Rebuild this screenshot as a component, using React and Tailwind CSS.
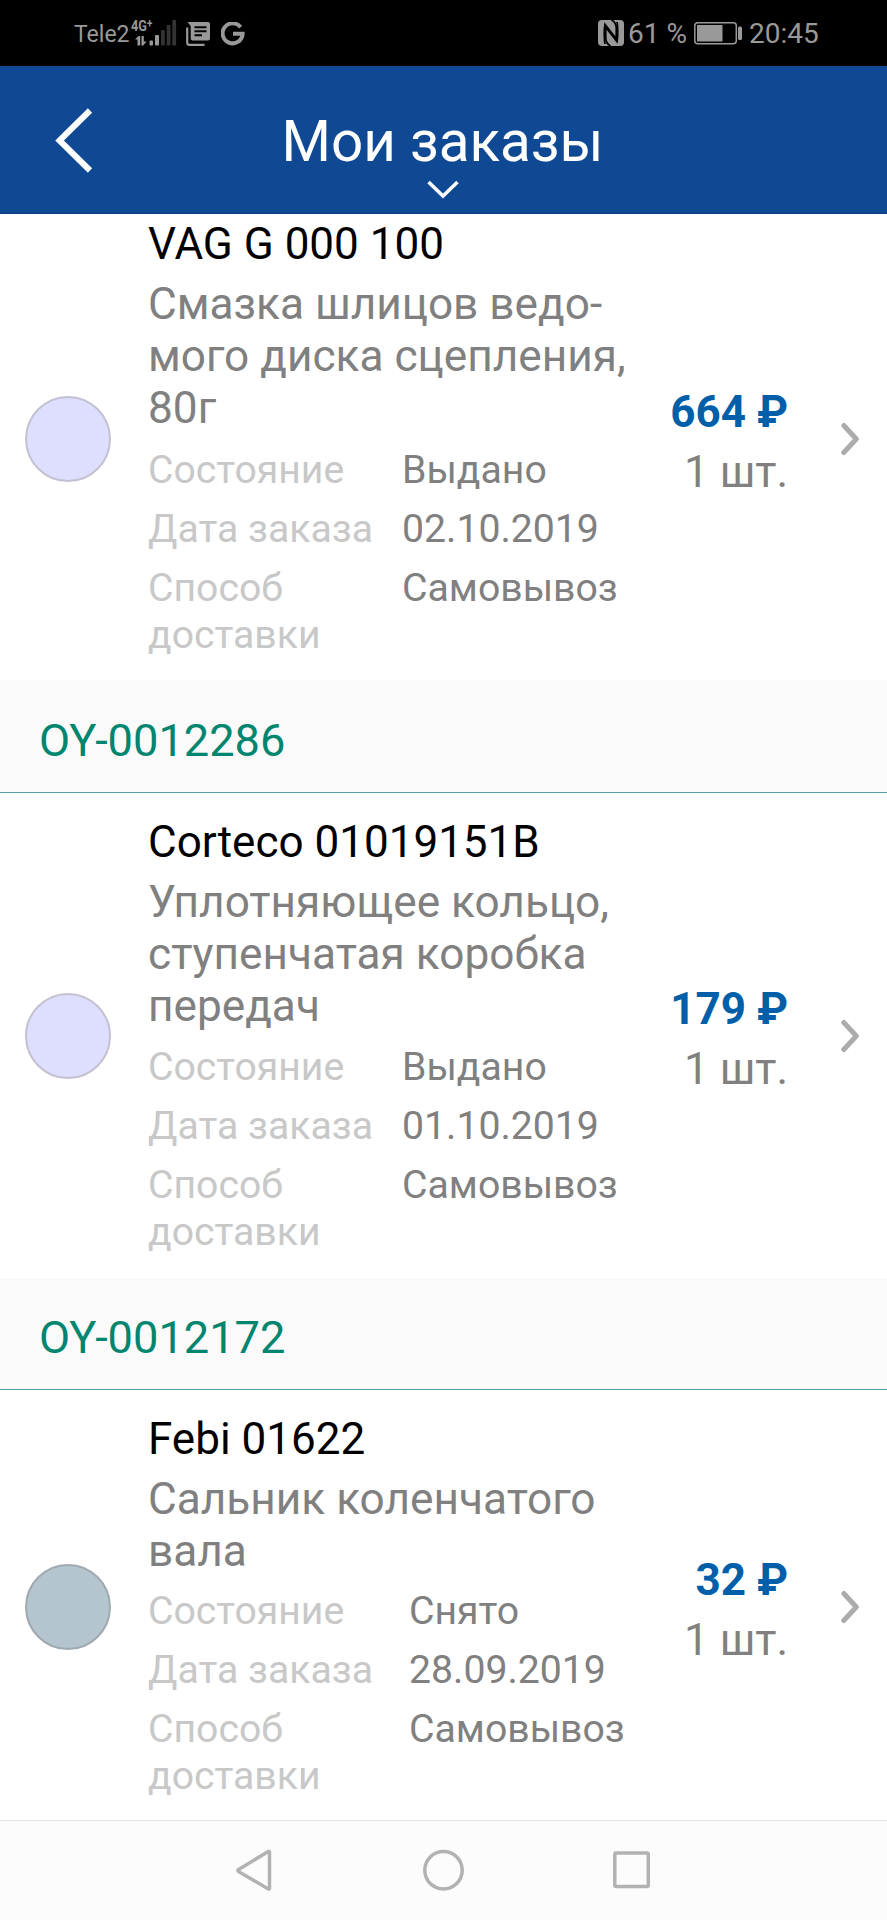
import React from "react";

const orders = [
  {
    title: "VAG G 000 100",
    lines: ["Смазка шлицов ведо-", "мого диска сцепления,", "80г"],
    rows: ["Выдано", "02.10.2019", "Самовывоз"],
    price: "664 ₽",
    dot: "bg-[#dedeff] border-[#c3c1d2]",
    labels: "w-[254px]",
    gap: "pt-[13px]",
    padding: "pt-[21px] pb-[21px]",
  },
  {
    number: "OY-0012286",
    heading: "h-[113px]",
    title: "Corteco 01019151B",
    lines: ["Уплотняющее кольцо,", "ступенчатая коробка", "передач"],
    rows: ["Выдано", "01.10.2019", "Самовывоз"],
    price: "179 ₽",
    dot: "bg-[#dedeff] border-[#c3c1d2]",
    labels: "w-[254px]",
    gap: "pt-3",
    padding: "pt-[23px] pb-[22px]",
  },
  {
    number: "OY-0012172",
    heading: "h-[112px]",
    title: "Febi 01622",
    lines: ["Сальник коленчатого", "вала"],
    rows: ["Снято", "28.09.2019", "Самовывоз"],
    price: "32 ₽",
    dot: "bg-[#b4c5cf] border-[#a0a9b0]",
    labels: "w-[261px]",
    gap: "pt-[11px]",
    padding: "pt-[23px] pb-[22px]",
  },
];

function StatusBar() {
  return (
    <div className="flex h-[66px] shrink-0 items-start bg-black text-[#999999]">
      <span className="ml-[74px] mt-[21px] w-[57px] text-[23px] leading-[27px]">Tele2</span>
      <div className="relative mt-[20px] h-[26px] w-[46px]">
        <span className="absolute left-0 top-[-2px] origin-left scale-x-[0.82] whitespace-nowrap text-[15.5px] font-bold leading-[17px]">4G<span className="relative -top-[3px] text-[12px]">+</span></span>
        <svg className="absolute inset-0" width="46" height="26" viewBox="0 0 46 26" fill="#999999">
          <path d="M4 19.500l3.500-3.500h1.700v9.500H6.500v-6H4zM10.500 16h2.300v5.500h2.700l-3.300 4h-1.700z" />
          <rect x="18.500" y="20.500" width="3.500" height="5" rx="1" />
          <rect x="24" y="15" width="4" height="10.500" rx="1" />
          <g fill="#333333">
            <rect x="30" y="10" width="3.800" height="15.500" rx="1" />
            <rect x="35.700" y="5" width="3.800" height="20.500" rx="1" />
            <rect x="41.300" y="0" width="3.800" height="25.500" rx="1" />
          </g>
        </svg>
      </div>
      <svg className="ml-[9px] mt-[22px]" width="24" height="24" viewBox="0 0 24 24">
        <path d="M1.200 5.500v15.300c0 1.200.7 2 2 2h15.300" fill="none" stroke="#999999" strokeWidth="2.200" />
        <path d="M1.500 0H22a2 2 0 0 1 2 2v14.500a2 2 0 0 1-2 2H6.700a2 2 0 0 1-2-2V4z" fill="#999999" />
        <path d="M8.500 5.300h12M8.500 9.300h12M8.500 13.300h7.500" stroke="#000" strokeWidth="2" />
      </svg>
      <svg className="ml-[11px] mt-[22px]" width="24" height="24" viewBox="0 0 24 24">
        <path d="M19.600 5.300A10 10 0 1 0 21.600 11.800H12" fill="none" stroke="#999999" strokeWidth="4" />
      </svg>
      <svg className="ml-[353px] mt-[20px]" width="26" height="26" viewBox="0 0 26 26">
        <rect width="26" height="26" rx="4" fill="#999999" />
        <path d="M12.500 26c-3-1.600-4.800-4.500-4.800-8.500V7.200L19 21.500c.8-5 .9-12.500.1-19.500" fill="none" stroke="#000" strokeWidth="1.800" />
        <path d="M13.500 0c3 1.600 4.800 4.500 4.800 8.500v10.300L7 4.500c-.8 5-.9 12.500-.1 19.500" fill="none" stroke="#000" strokeWidth="1.800" />
      </svg>
      <span className="ml-[4px] mt-[17px] w-[66px] whitespace-nowrap text-[28px] leading-[33px]">61 %</span>
      <svg className="mt-[22px]" width="49" height="23" viewBox="0 0 49 23">
        <rect x="0.800" y="0.800" width="41.500" height="21" rx="3" fill="none" stroke="#999999" strokeWidth="1.500" />
        <rect x="3" y="3" width="25.500" height="16.500" fill="#999999" />
        <rect x="44" y="4.500" width="4" height="13.500" rx="1.500" fill="#999999" />
      </svg>
      <span className="ml-[6px] mt-[17px] text-[28px] leading-[33px]">20:45</span>
    </div>
  );
}

function Header() {
  return (
    <header className="relative z-10 flex h-[148px] shrink-0 items-start border-b border-[#0a3a80] bg-[#104993]">
      <svg className="ml-[54px] mt-[41px]" width="42" height="68" viewBox="0 0 42 68" fill="none" stroke="#fff" strokeWidth="6">
        <path d="M36 3.500L5.500 33.500l30.500 30" />
      </svg>
      <div className="ml-[96px] mr-[194px] flex flex-1 flex-col items-center">
        <h1 className="mt-[42px] whitespace-nowrap text-[56.6px] leading-[67px] text-white">Мои заказы</h1>
        <svg className="mt-[4px]" width="34" height="22" viewBox="0 0 34 22" fill="none" stroke="#fff" strokeWidth="3.500">
          <path d="M2.500 3L17 17 31.500 3" />
        </svg>
      </div>
    </header>
  );
}

function Row({ label, value, labels }) {
  return (
    <div className="flex">
      <div className={"shrink-0 text-[#c8c8c8] " + labels}>{label}</div>
      <div className="whitespace-nowrap text-[#808080]">{value}</div>
    </div>
  );
}

function Order({ order }) {
  return (
    <section>
      {order.number && (
        <div className={"flex items-center border-b border-[#58a0a6] bg-[#fafafa] pl-[39px] pt-[9px] text-[45.2px] text-[#00856f] " + order.heading}>
          {order.number}
        </div>
      )}
      <div className={"flex items-center bg-white " + order.padding}>
        <div className={"ml-[25px] size-[86px] shrink-0 rounded-full border-2 " + order.dot} />
        <div className="ml-[37px] w-[492px] shrink-0">
          <h2 className="whitespace-nowrap text-[44px] leading-[52px] text-black">{order.title}</h2>
          <div className="pt-2 text-[44.2px] leading-[52px] text-[#808080]">
            {order.lines.map((line) => (
              <div key={line} className="whitespace-nowrap">{line}</div>
            ))}
          </div>
          <div className={"flex flex-col gap-3 text-[39.2px] leading-[47px] " + order.gap}>
            <Row labels={order.labels} label="Состояние" value={order.rows[0]} />
            <Row labels={order.labels} label="Дата заказа" value={order.rows[1]} />
            <Row labels={order.labels} label={<>Способ<br />доставки</>} value={order.rows[2]} />
          </div>
        </div>
        <div className="flex w-[148px] flex-col items-end gap-2 whitespace-nowrap pt-[6px] text-[44px] leading-[52px]">
          <div className="font-bold text-[#005fa8]">{order.price}</div>
          <div className="text-[#808080]">1 шт.</div>
        </div>
        <svg className="ml-[51px]" width="22" height="34" viewBox="0 0 22 34" fill="none" stroke="#acacac" strokeWidth="5" strokeLinecap="round" strokeLinejoin="round">
          <path d="M4.800 3.500L17.300 17 4.800 30.500" />
        </svg>
      </div>
    </section>
  );
}

function NavBar() {
  return (
    <nav className="flex h-[100px] shrink-0 items-start border-t border-[#e4e4e4] bg-[#fcfcfc]">
      <svg className="ml-[235px] mt-[27px]" width="38" height="44" viewBox="0 0 38 44" fill="none" stroke="#b2b2b2" strokeWidth="3.500" strokeLinejoin="round">
        <path d="M33.300 3.500c.6-.3 1.200 0 1.200.8v35.900c0 .8-.6 1.100-1.200.8L3.500 23.400c-.9-.5-.9-1.400 0-1.900z" />
      </svg>
      <svg className="ml-[149px] mt-[27px]" width="44" height="44" viewBox="0 0 44 44" fill="none" stroke="#b2b2b2" strokeWidth="3.500">
        <circle cx="21.500" cy="22.300" r="18.700" />
      </svg>
      <svg className="ml-[146px] mt-[29px]" width="40" height="40" viewBox="0 0 40 40" fill="none" stroke="#b2b2b2" strokeWidth="3.500">
        <rect x="2.800" y="3" width="33.500" height="33.500" rx="1.500" />
      </svg>
    </nav>
  );
}

export default function App() {
  return (
    <div className="flex h-[1920px] w-[887px] flex-col overflow-hidden bg-white font-[Roboto,sans-serif]">
      <StatusBar />
      <Header />
      <main className="min-h-0 flex-1 overflow-hidden">
        <div className="-mt-[17px]">
          {orders.map((order) => (
            <Order key={order.title} order={order} />
          ))}
        </div>
      </main>
      <NavBar />
    </div>
  );
}
